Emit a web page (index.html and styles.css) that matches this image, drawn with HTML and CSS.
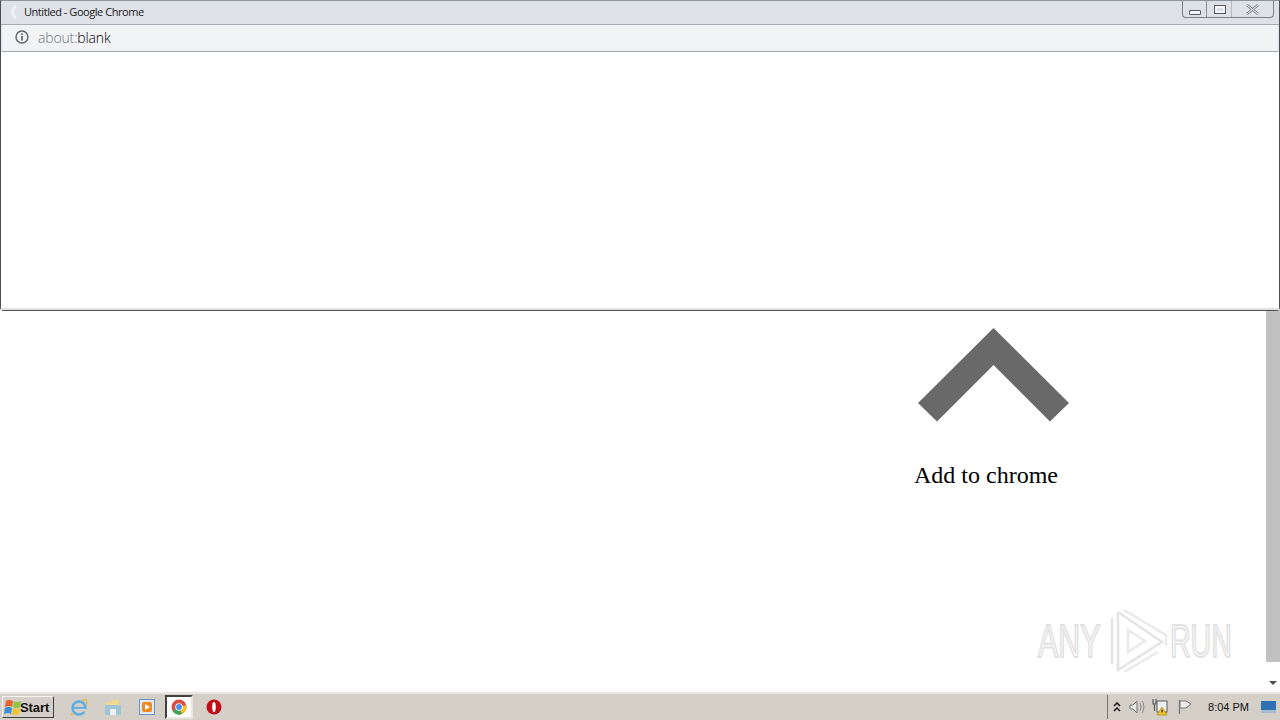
FILE: index.html
```html
<!DOCTYPE html>
<html lang="en">
<head>
    <meta charset="UTF-8">
    <meta name="viewport" content="width=device-width, initial-scale=1.0">
    <title>Add to chrome</title>
    <link rel="stylesheet" href="styles.css">
</head>
<body>
    <div class="desktop">
        <div class="page">
            <div class="content">
                <div class="install">
                    <svg class="chevron" width="152" height="94" viewBox="0 0 152 94">
                        <polygon points="75.5,0 151,75 132,93.5 75.5,37 19,93.5 0,75" fill="#696969"/>
                    </svg>
                    <p class="install-label">Add to chrome</p>
                </div>
            </div>
            <div class="scrollbar">
                <div class="scroll-thumb"></div>
                <div class="scroll-arrow"></div>
            </div>
        </div>

        <!-- popup sits over the page -->
        <div class="popup">
            <div class="titlebar">
                <svg class="title-icon" width="12" height="16" viewBox="0 0 12 16">
                    <path d="M10 2 A7 7 0 0 0 10 14" fill="none" stroke="#eef0f3" stroke-width="3"/>
                </svg>
                <span class="title-text">Untitled - Google Chrome</span>
                <div class="win-buttons">
                    <div class="win-btn btn-min"><span class="glyph-min"></span></div>
                    <div class="win-btn btn-max"><span class="glyph-max"></span></div>
                    <div class="win-btn btn-close">
                        <svg width="13" height="11" viewBox="0 0 13 11">
                            <path d="M1 1 L12 10 M12 1 L1 10" stroke="#85898f" stroke-width="2.6"/>
                            <path d="M1 1 L12 10 M12 1 L1 10" stroke="#eef0f3" stroke-width="1"/>
                        </svg>
                    </div>
                </div>
            </div>
            <div class="addressbar">
                <svg class="info-icon" width="14" height="14" viewBox="0 0 14 14">
                    <circle cx="7" cy="7" r="6" fill="none" stroke="#5f6368" stroke-width="1.4"/>
                    <rect x="6.2" y="6" width="1.7" height="4.6" fill="#5f6368"/>
                    <rect x="6.2" y="3.4" width="1.7" height="1.7" fill="#5f6368"/>
                </svg>
                <span class="url"><span class="url-scheme">about:</span>blank</span>
            </div>
            <div class="popup-body"></div>
        </div>

        <div class="watermark">
            <span class="wm-text wm-any">ANY</span>
            <svg class="wm-logo" width="60" height="66" viewBox="0 0 60 66">
                <path d="M4 10 L4 56 M10 4 L10 62 L54 34 L10 4" fill="none" stroke="#e4e4e4" stroke-width="2.5"/>
                <path d="M16 2 L58 27 L58 38 M20 22 L20 44 L37 33 Z M16 64 L50 44" fill="none" stroke="#eaeaea" stroke-width="2.5"/>
            </svg>
            <span class="wm-text wm-run">RUN</span>
        </div>
    </div>

    <div class="taskbar">
        <div class="start-btn">
            <svg width="18" height="18" viewBox="0 0 18 18">
                <path d="M2 3 Q5 1 9 3 L8 9 Q5 7 1 9 Z" fill="#e8602c"/>
                <path d="M10 3 Q13 5 17 3 L16 9 Q13 11 9 9 Z" fill="#8cc63f"/>
                <path d="M1 10 Q5 8 8 10 L7 16 Q4 14 0 16 Z" fill="#3a8fd8"/>
                <path d="M9 10 Q12 12 16 10 L15 16 Q12 18 8 16 Z" fill="#f5c32c"/>
            </svg>
            <span class="start-label">Start</span>
        </div>
        <div class="quick-launch">
            <div class="task-icon">
                <svg width="18" height="18" viewBox="0 0 18 18">
                    <ellipse cx="9" cy="10" rx="6.5" ry="6.5" fill="none" stroke="#5aaee6" stroke-width="2.4"/>
                    <rect x="4" y="9" width="10" height="1.8" fill="#5aaee6"/>
                    <rect x="11" y="11" width="6" height="2.6" fill="#d4d0c8"/>
                    <path d="M2 15 Q0 17 4 16 M12 3 Q17 0 17 4 L16 7" fill="none" stroke="#e8b23c" stroke-width="1.2"/>
                </svg>
            </div>
            <div class="task-icon">
                <svg width="18" height="18" viewBox="0 0 18 18">
                    <path d="M2 4 H7 L8.500 2 H15 V15 H2 Z" fill="#f0d98a"/>
                    <rect x="1" y="7" width="16" height="10" fill="#9fc6d8"/>
                    <rect x="6" y="11" width="6" height="6" fill="#eef3f5"/>
                </svg>
            </div>
            <div class="task-icon">
                <svg width="18" height="18" viewBox="0 0 18 18">
                    <rect x="1.500" y="1.500" width="15" height="15" fill="#dfe8f3" stroke="#6d94c4"/>
                    <rect x="4" y="4" width="10" height="10" rx="2" fill="#f08a1d"/>
                    <path d="M7 6 L12 9 L7 12 Z" fill="#ffffff"/>
                </svg>
            </div>
            <div class="task-icon task-active">
                <svg width="16" height="16" viewBox="0 0 16 16">
                    <circle cx="8" cy="8" r="7.500" fill="#dd4b3e"/>
                    <path d="M8 8 L1.500 12 A7.500 7.500 0 0 0 11 15 Z" fill="#3aa757"/>
                    <path d="M8 8 L15.300 6 A7.500 7.500 0 0 1 11 15 Z" fill="#f5c32c"/>
                    <circle cx="8" cy="8" r="3.800" fill="#ffffff"/>
                    <circle cx="8" cy="8" r="2.900" fill="#4a8af4"/>
                </svg>
            </div>
            <div class="task-icon task-opera">
                <svg width="18" height="18" viewBox="0 0 18 18">
                    <circle cx="9" cy="9" r="7.500" fill="#c20f16"/>
                    <ellipse cx="9" cy="9" rx="1.800" ry="5" fill="#ffffff"/>
                </svg>
            </div>
        </div>
        <div class="tray">
            <span class="tray-up">
                <svg width="8" height="10" viewBox="0 0 8 10">
                    <path d="M1 4 L4 1 L7 4 M1 9 L4 6 L7 9" fill="none" stroke="#111" stroke-width="1.500"/>
                </svg>
            </span>
            <svg class="tray-speaker" width="18" height="16" viewBox="0 0 18 16">
                <path d="M2 6 H5 L9 2 V14 L5 10 H2 Z" fill="#e6e6e2" stroke="#77777a"/>
                <path d="M12 4 Q14 8 12 12 M14.500 2 Q17.500 8 14.500 14" fill="none" stroke="#8a8a8c"/>
            </svg>
            <svg class="tray-net" width="18" height="18" viewBox="0 0 18 18">
                <rect x="6" y="3" width="10" height="11" fill="#eeeeea" stroke="#55585c"/>
                <path d="M2 1 V6 H5 V1 M3.500 6 V13" fill="none" stroke="#55585c" stroke-width="1.200"/>
                <path d="M11 9 L16 17 H6 Z" fill="#f5c32c" stroke="#a67c00" stroke-width="0.600"/>
                <rect x="10.500" y="11.500" width="1.200" height="3" fill="#222"/>
            </svg>
            <svg width="16" height="16" viewBox="0 0 16 16">
                <path d="M2.500 1 V15" stroke="#77777a" stroke-width="1.300"/>
                <path d="M3 2 H9 L14 5 L9 9 H3 Z" fill="#eeeeea" stroke="#77777a"/>
            </svg>
            <span class="clock">8:04 PM</span>
            <svg class="show-desktop" width="15" height="12" viewBox="0 0 15 12">
                <rect width="15" height="9" fill="#2f6fb3"/>
                <rect y="9" width="15" height="3" fill="#a9bccf"/>
            </svg>
        </div>
    </div>
</body>
</html>
```

FILE: styles.css
```css
* {
    box-sizing: border-box;
}

body {
    margin: 0;
    width: 1280px;
    height: 720px;
    overflow: hidden;
    display: flex;
    flex-direction: column;
    background: #ffffff;
    font-family: "Liberation Sans", Arial, sans-serif;
}

.desktop {
    flex: 1;
    position: relative;
    min-height: 0;
}

.page {
    height: 100%;
    display: flex;
}

.content {
    flex: 1;
    display: flex;
    justify-content: flex-end;
    padding-top: 328px;
    padding-right: 195px;
}

.install {
    width: 157px;
}

.chevron {
    display: block;
    margin-left: 4px;
}

.install-label {
    margin: 39px 0 0;
    font-family: "Liberation Serif", "Times New Roman", serif;
    font-size: 24px;
    line-height: 28px;
    color: #000000;
    white-space: nowrap;
}

.scrollbar {
    width: 14px;
    padding-top: 310px;
    display: flex;
    flex-direction: column;
    align-items: stretch;
}

.scroll-thumb {
    height: 352px;
    background: #c1c1c1;
}

.scroll-arrow {
    width: 0;
    height: 0;
    margin: 19px auto 0;
    border-left: 4px solid transparent;
    border-right: 4px solid transparent;
    border-top: 4px solid #505050;
}

/* popup window */
.popup {
    position: absolute;
    top: 0;
    left: 0;
    width: 1280px;
    height: 311px;
    display: flex;
    flex-direction: column;
    background: #dee1e8;
    border: 1px solid #4b4f55;
    border-top-color: #8d939b;
    border-radius: 0 0 4px 4px;
}

.titlebar {
    height: 24px;
    display: flex;
    align-items: center;
    padding-left: 5px;
    padding-bottom: 2px;
    border-bottom: 1px solid #a9adb3;
}

.title-icon {
    margin-right: 6px;
}

.title-text {
    font-family: "Open Sans", "Liberation Sans", sans-serif;
    font-size: 11px;
    color: #1a1a1a;
    letter-spacing: -0.45px;
}

.win-buttons {
    margin-left: auto;
    margin-right: 5px;
    height: 17px;
    align-self: flex-start;
    display: flex;
    border: 1px solid #7d8188;
    border-top: none;
    border-radius: 0 0 4px 4px;
}

.win-btn {
    display: flex;
    align-items: center;
    justify-content: center;
    height: 100%;
}

.btn-min {
    width: 24px;
    border-right: 1px solid #8d9197;
}

.btn-max {
    width: 25px;
    padding-left: 1px;
    border-right: 1px solid #b5b8be;
}

.btn-close {
    width: 41px;
}

.glyph-min {
    width: 12px;
    height: 5px;
    margin-top: 6px;
    background: #f4f5f7;
    border: 1px solid #55595f;
    border-radius: 1px;
}

.glyph-max {
    width: 12px;
    height: 9px;
    background: #dee1e8;
    border: 1px solid #55595f;
    box-shadow: inset 0 0 0 2px #f4f5f7;
}

.addressbar {
    height: 27px;
    display: flex;
    align-items: center;
    margin: 0 1px;
    padding-left: 13px;
    padding-bottom: 2px;
    background: #f1f3f5;
    border-bottom: 1px solid #a3a6aa;
}

.info-icon {
    margin-right: 9px;
}

.url {
    font-family: "Open Sans", "Liberation Sans", sans-serif;
    font-size: 14px;
    font-weight: 300;
    letter-spacing: -0.15px;
    color: #000000;
}

.url-scheme {
    color: #70757a;
}

.popup-body {
    flex: 1;
    background: #ffffff;
    border-bottom: 2px solid #e2e2e2;
}

/* watermark */
.watermark {
    position: absolute;
    left: 1038px;
    top: 608px;
    display: flex;
    align-items: center;
    gap: 6px;
}

.wm-text {
    font-family: "Liberation Sans", Arial, sans-serif;
    font-size: 46px;
    line-height: 60px;
    color: #f8f8f8;
    -webkit-text-stroke: 2px #e2e2e2;
    transform-origin: left center;
    white-space: nowrap;
}

.wm-any {
    width: 64px;
    transform: scaleX(0.66);
}

.wm-run {
    width: 64px;
    margin-left: -4px;
    transform: scaleX(0.62);
}

/* taskbar */
.taskbar {
    height: 28px;
    flex-shrink: 0;
    display: flex;
    align-items: center;
    background: #d4d0c8;
    border-top: 2px solid #e9e6df;
}

.start-btn {
    width: 52px;
    height: 22px;
    margin-left: 2px;
    display: flex;
    align-items: center;
    padding-left: 1px;
    font-size: 13px;
    font-weight: bold;
    letter-spacing: -0.1px;
    color: #111111;
    background: #d4d0c8;
    border: 1px solid;
    border-color: #f5f3ee #404040 #404040 #f5f3ee;
}

.start-label {
    margin-left: -2px;
}

.quick-launch {
    display: flex;
    align-items: center;
    margin-left: 10px;
    gap: 4px;
}

.task-icon {
    width: 30px;
    height: 24px;
    display: flex;
    align-items: center;
    justify-content: center;
}

.task-active {
    width: 28px;
    margin-left: -1px;
    background: #ffffff;
    border: 2px solid;
    border-color: #404040 #e9e6df #e9e6df #404040;
}

.task-opera {
    margin-left: 2px;
}

.tray {
    margin-left: auto;
    height: 24px;
    display: flex;
    align-items: center;
    gap: 7px;
    padding-left: 4px;
    border-left: 1px solid #77746c;
}

.tray-up {
    display: flex;
    width: 10px;
    margin-right: -1px;
    justify-content: center;
}

.tray-speaker {
    margin-right: -2px;
}

.tray-net {
    margin-right: 1px;
}

.clock {
    width: 46px;
    margin-left: 3px;
    font-size: 11px;
    text-align: right;
    color: #111111;
}

.show-desktop {
    margin-left: 5px;
    margin-right: 4px;
}
```
